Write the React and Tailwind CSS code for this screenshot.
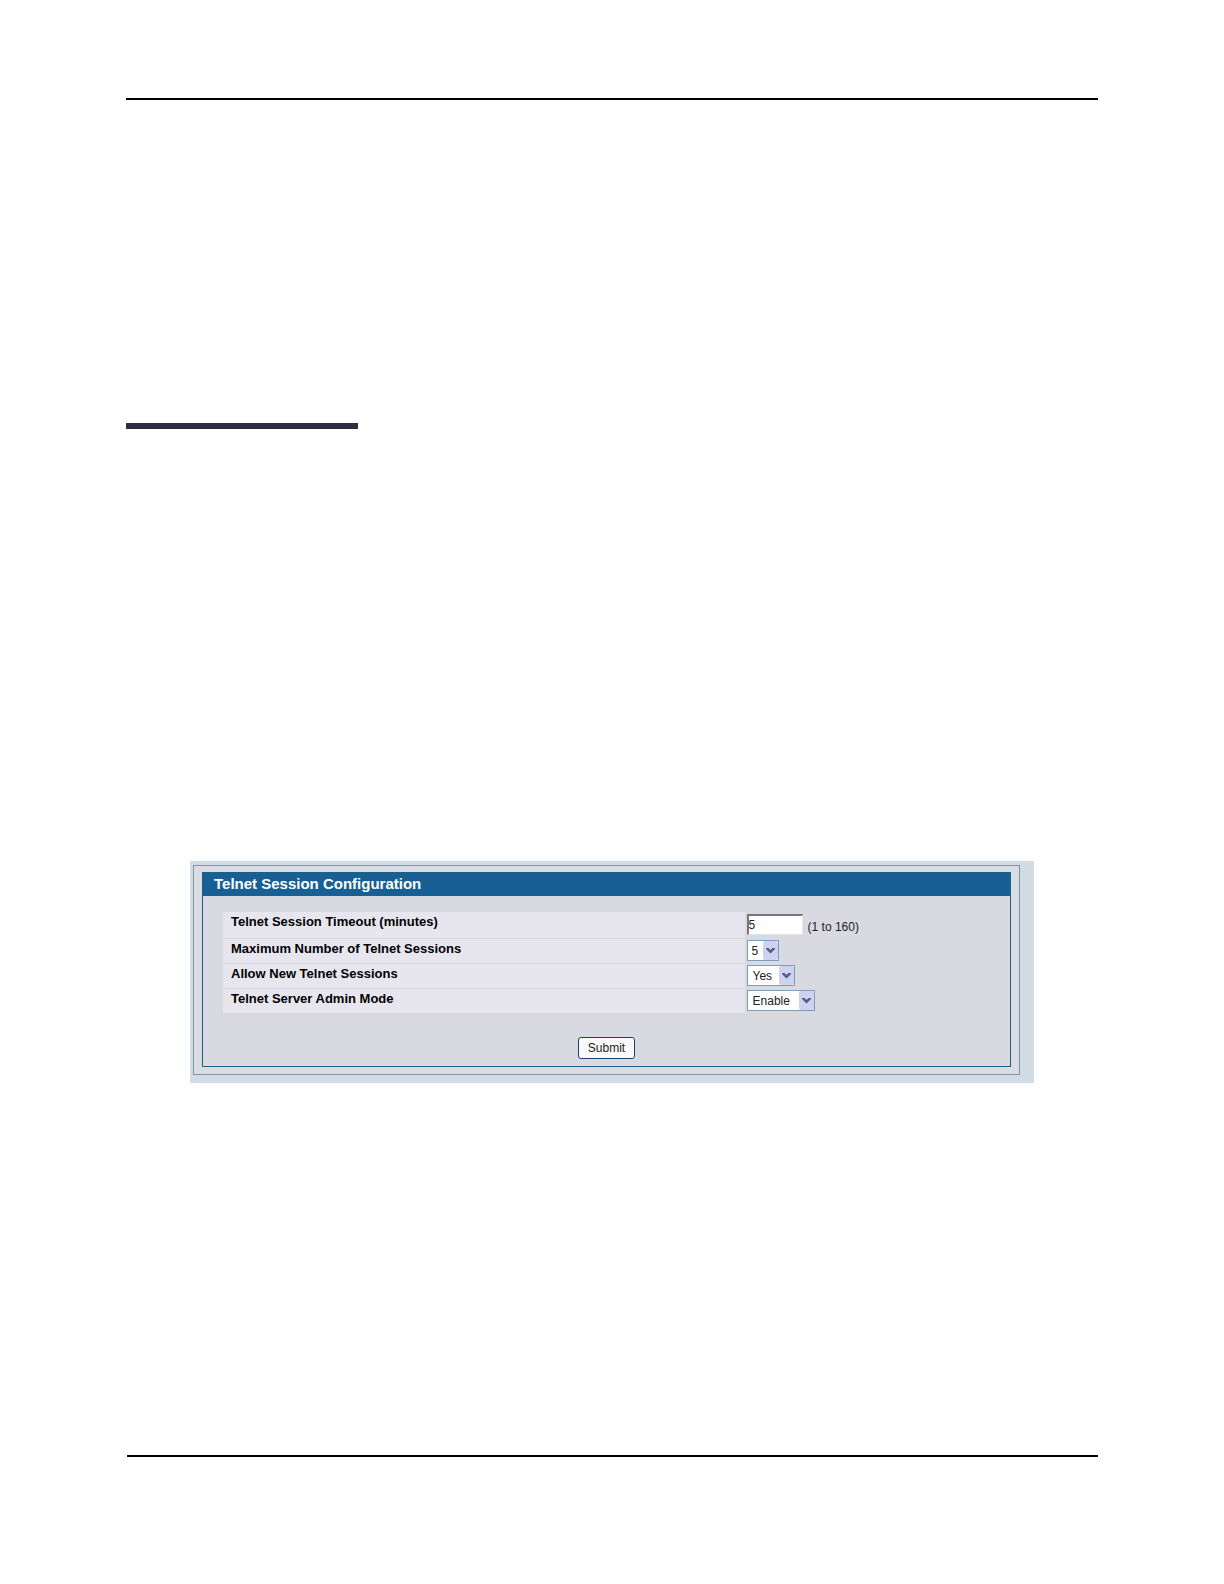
import React from "react";

const rows = [
  { id: "timeout", label: "Telnet Session Timeout (minutes)" },
  {
    id: "max-sessions",
    label: "Maximum Number of Telnet Sessions",
    options: ["5", "4", "3", "2", "1", "0"],
    width: "w-8 pl-1",
  },
  {
    id: "allow-new",
    label: "Allow New Telnet Sessions",
    options: ["Yes", "No"],
    width: "w-12 pl-[5px]",
  },
  {
    id: "admin-mode",
    label: "Telnet Server Admin Mode",
    options: ["Enable", "Disable"],
    width: "w-[68px] pl-[5px]",
  },
];

function Select({ id, options, width }) {
  return (
    <span className="inline-grid items-center align-top">
      <select
        id={id}
        className={`col-start-1 row-start-1 h-[21px] appearance-none rounded-none border border-[#7f9db9] bg-white text-xs text-[#222] ${width}`}
      >
        {options.map((o) => (
          <option key={o}>{o}</option>
        ))}
      </select>
      <span className="pointer-events-none col-start-1 row-start-1 mr-px flex h-[19px] w-[15px] items-center justify-center justify-self-end rounded-xs bg-[#cdd2f1]">
        <svg width="9" height="7" viewBox="0 0 9 7" fill="#555b85">
          <path d="M0 1h2.5l2 2 2-2H9v1L4.5 6.5 0 2Z" />
        </svg>
      </span>
    </span>
  );
}

export default function App() {
  return (
    <main className="min-h-screen bg-white pt-[98px] font-['Liberation_Sans',Arial,sans-serif] text-black">
      <hr className="mx-[126px] h-0.5 border-0 bg-black" />
      <div className="mx-[126px] mt-[323px] h-1.5 w-[232px] bg-[#302e3e]" />

      <section className="mx-[190px] mt-[432px] bg-[#d2dce7] pt-1 pr-3.5 pb-2 pl-[3px]">
        <div className="border border-[#8492a6] bg-[#d9dce3] px-2 pt-1.5 pb-[7px]">
          <form className="border border-[#1b6187] bg-[#d9d9e1]" onSubmit={(e) => e.preventDefault()}>
            <h1 className="flex h-[23px] items-center bg-[#185f94] px-[11px] text-[15px] font-bold text-white">
              Telnet Session Configuration
            </h1>
            <div className="px-5 pt-4">
              <table className="w-full table-fixed border-collapse">
                <tbody>
                  {rows.map((r, i) => (
                    <tr key={r.id}>
                      <th
                        scope="row"
                        className={`w-[68%] border-b border-[#d9d8e2] bg-[#e7e6ef] px-2 text-left align-top text-[13px] leading-5 font-bold ${i === 0 ? "h-[26px]" : "h-[25px]"}`}
                      >
                        <label htmlFor={r.id}>{r.label}</label>
                      </th>
                      <td className="py-0.5 pl-0.5 align-top text-xs text-[#222]">
                        {r.options ? (
                          <Select id={r.id} options={r.options} width={r.width} />
                        ) : (
                          <div className="flex items-end gap-[5px]">
                            <input
                              id={r.id}
                              type="text"
                              defaultValue="5"
                              className="h-[21px] w-14 border-t-2 border-r border-b border-l-2 border-t-[#77777c] border-r-[#e4e4e8] border-b-[#e4e4e8] border-l-[#77777c] bg-white text-xs"
                            />
                            <span>(1 to 160)</span>
                          </div>
                        )}
                      </td>
                    </tr>
                  ))}
                </tbody>
              </table>
            </div>
            <div className="flex justify-center pt-[23px] pb-[7px]">
              <button
                type="submit"
                className="h-[22px] w-[57px] rounded-[3px] border border-[#1c3f68] bg-[#fafafb] text-xs text-[#222]"
              >
                Submit
              </button>
            </div>
          </form>
        </div>
      </section>

      <hr className="mr-[126px] ml-[127px] mt-[372px] h-0.5 border-0 bg-black" />
    </main>
  );
}
